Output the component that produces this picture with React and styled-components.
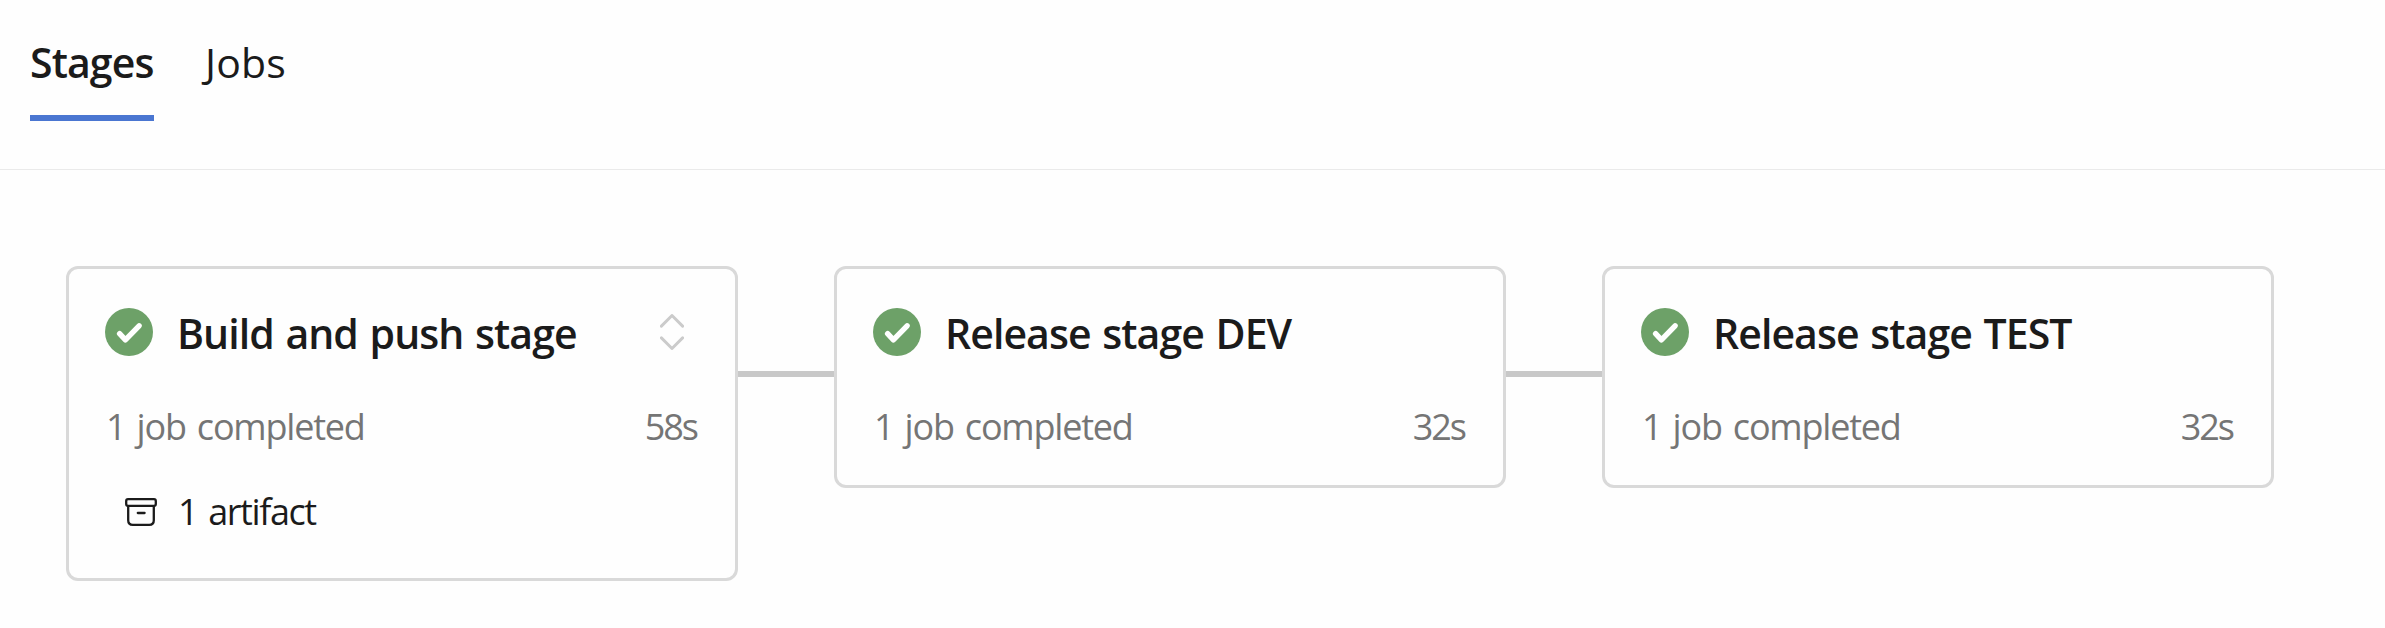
import { Fragment } from "react";
import styled, { createGlobalStyle, css } from "styled-components";

const tabs = [
  { name: "Stages", active: true },
  { name: "Jobs", active: false },
];

const stages = [
  {
    name: "Build and push stage",
    jobs: "1 job completed",
    duration: "58s",
    artifacts: "1 artifact",
    expandable: true,
  },
  {
    name: "Release stage DEV",
    jobs: "1 job completed",
    duration: "32s",
  },
  {
    name: "Release stage TEST",
    jobs: "1 job completed",
    duration: "32s",
  },
];

export default function App() {
  return (
    <>
      <GlobalStyle />
      <StyledTabBar>
        {tabs.map(({ name, active }) => (
          <StyledTab key={name} type="button" $active={active}>
            {name}
          </StyledTab>
        ))}
      </StyledTabBar>
      <StyledPipeline>
        {stages.map((stage, index) => (
          <Fragment key={stage.name}>
            {index > 0 ? <StyledConnector /> : null}
            <StageCard {...stage} />
          </Fragment>
        ))}
      </StyledPipeline>
    </>
  );
}

function StageCard({ name, jobs, duration, artifacts, expandable }) {
  return (
    <StyledCard>
      <StyledCardHeader>
        <SuccessIcon />
        <StyledTitle>{name}</StyledTitle>
        {expandable ? <ExpandIcon /> : null}
      </StyledCardHeader>
      <StyledSummary>
        <StyledJobs>{jobs}</StyledJobs>
        <StyledDuration>{duration}</StyledDuration>
      </StyledSummary>
      {artifacts ? (
        <StyledArtifacts>
          <ArtifactIcon />
          <span>{artifacts}</span>
        </StyledArtifacts>
      ) : null}
    </StyledCard>
  );
}

function SuccessIcon() {
  return (
    <svg width="48" height="48" viewBox="0 0 48 48" fill="none">
      <circle cx="24" cy="24" r="24" fill="#6da168" />
      <path
        d="M14.6 25.6 20.4 31.8 34.1 17.8"
        stroke="#fff"
        strokeWidth="5.4"
        strokeLinecap="round"
        strokeLinejoin="round"
      />
    </svg>
  );
}

function ExpandIcon() {
  return (
    <svg width="24" height="36" viewBox="0 0 24 36" fill="none">
      <path
        d="M1.4 12.1 12 1.5 22.6 12.1M1.4 23.9 12 34.5 22.6 23.9"
        stroke="#cbcbcb"
        strokeWidth="2.9"
        strokeLinecap="round"
        strokeLinejoin="round"
      />
    </svg>
  );
}

function ArtifactIcon() {
  return (
    <svg width="32" height="28" viewBox="0 0 32 28" fill="none">
      <g stroke="#1b1b1b" strokeWidth="2.3">
        <rect x="1.2" y="1.2" width="29.6" height="6.6" rx="1.8" />
        <path d="M3.2 8V22.2Q3.2 26.8 7.8 26.8H24.2Q28.8 26.8 28.8 22.2V8" />
        <path d="M12.8 15H19.6" strokeLinecap="round" />
      </g>
    </svg>
  );
}

const GlobalStyle = createGlobalStyle`
  body {
    margin: 0;
    background-color: #fefefe;
    color: #1b1b1b;
    font-family: "Open Sans", "Noto Sans", sans-serif;
  }
`;

const StyledTabBar = styled.nav`
  box-sizing: border-box;
  display: flex;
  align-items: flex-start;
  gap: 51px;
  height: 170px;
  padding: 35px 30px 0;
  border-bottom: 1px solid #eaeaea;
`;

const StyledTab = styled.button`
  box-sizing: border-box;
  display: flex;
  height: 86px;
  padding: 0;
  border: none;
  border-bottom: 6px solid transparent;
  background: none;
  color: inherit;
  font-family: inherit;
  font-size: 41px;
  line-height: 55px;
  letter-spacing: 0.2px;
  white-space: nowrap;

  ${({ $active }) =>
    $active &&
    css`
      width: 124px;
      border-bottom-color: #4a76d1;
      font-weight: 600;
      letter-spacing: -0.9px;
    `};
`;

const StyledPipeline = styled.main`
  display: flex;
  align-items: flex-start;
  padding: 96px 66px 0;
`;

const StyledConnector = styled.div`
  flex: none;
  width: 96px;
  height: 6px;
  margin-top: 105px;
  background-color: #c8c8c8;
`;

const StyledCard = styled.section`
  box-sizing: border-box;
  flex: none;
  width: 672px;
  padding: 39px 36px 33px;
  border: 3px solid #d9d9d9;
  border-radius: 12px;
  background-color: #fefefe;
`;

const StyledCardHeader = styled.header`
  display: flex;
  align-items: center;
  gap: 24px;
  height: 48px;
  padding-right: 15px;

  svg {
    flex: none;
  }
`;

const StyledTitle = styled.h2`
  flex: 1;
  margin: 0;
  padding-top: 2px;
  font-size: 41px;
  font-weight: 600;
  line-height: 48px;
  letter-spacing: -0.95px;
  word-spacing: 2px;
  white-space: nowrap;
`;

const StyledSummary = styled.div`
  display: flex;
  justify-content: space-between;
  height: 48px;
  margin-top: 48px;
  color: #757575;
  font-size: 36px;
  line-height: 46px;
`;

const StyledJobs = styled.span`
  padding-left: 1px;
  letter-spacing: -1.2px;
  word-spacing: 3px;
`;

const StyledDuration = styled.span`
  padding-right: 2px;
  letter-spacing: -2px;
`;

const StyledArtifacts = styled.div`
  display: flex;
  align-items: center;
  gap: 21px;
  height: 48px;
  margin-top: 36px;
  margin-bottom: 9px;
  padding-left: 20px;
  font-size: 36px;
  line-height: 48px;
  letter-spacing: -1.4px;
  word-spacing: 3px;

  span {
    padding-bottom: 1px;
  }
`;
